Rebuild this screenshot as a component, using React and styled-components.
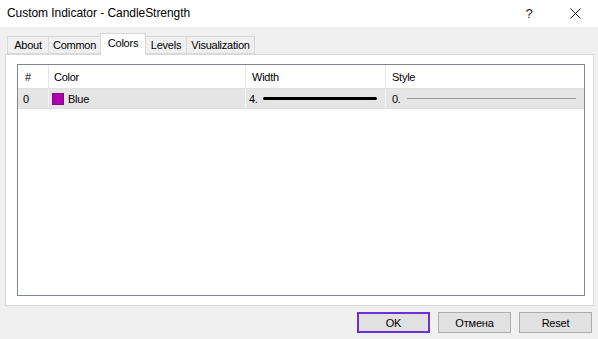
import React from "react";
import styled, { createGlobalStyle } from "styled-components";

const Global = createGlobalStyle`
  html, body { margin: 0; padding: 0; background: #f0f0f0; }
  * { box-sizing: border-box; }
`;

const Window = styled.div`
  width: 598px;
  height: 339px;
  display: flex;
  flex-direction: column;
  background: #f0f0f0;
  font-family: "Liberation Sans", Arial, sans-serif;
  color: #000;
  overflow: hidden;
`;

const TitleBar = styled.div`
  height: 27px;
  background: #fff;
  display: flex;
  align-items: center;
  padding-left: 7px;
`;

const Title = styled.div`
  flex: 1;
  font-size: 12px;
  letter-spacing: -0.05px;
  margin-top: -2px;
`;

const CaptionButton = styled.div`
  width: 46px;
  height: 27px;
  display: flex;
  align-items: center;
  justify-content: center;
  font-size: 13px;
  color: #222;
`;

const Body = styled.div`
  flex: 1;
  display: flex;
  flex-direction: column;
  padding: 6px 4px 0 5px;
`;

const TabStrip = styled.div`
  display: flex;
  align-items: flex-end;
  height: 21px;
  padding-left: 2px;
  position: relative;
  z-index: 1;
`;

const Tab = styled.div`
  width: ${(p) => p.$w}px;
  height: ${(p) => (p.$active ? 22 : 18)}px;
  margin-bottom: ${(p) => (p.$active ? -1 : 0)}px;
  background: ${(p) => (p.$active ? "#fff" : "#f0f0f0")};
  border: 1px solid #d9d9d9;
  border-bottom: ${(p) => (p.$active ? "none" : "1px solid #d9d9d9")};
  margin-left: -1px;
  display: flex;
  align-items: center;
  justify-content: center;
  padding-bottom: ${(p) => (p.$active ? 4 : 0)}px;
  font-size: 11px;
  letter-spacing: -0.25px;
  &:first-child { margin-left: 0; }
`;

const Panel = styled.div`
  height: 252px;
  background: #fff;
  border: 1px solid #d9d9d9;
  padding: 9px 8px 9px 11px;
  display: flex;
`;

const Table = styled.div`
  flex: 1;
  border: 1px solid #828790;
  display: flex;
  flex-direction: column;
  background: #fff;
`;

const Row = styled.div`
  display: grid;
  grid-template-columns: 31px 197px 140px 1fr;
  height: ${(p) => (p.$header ? 24 : 20)}px;
  background: ${(p) => (p.$header ? "#fff" : "#e5e5e5")};
  border-bottom: 1px solid #e0e0e0;
`;

const Cell = styled.div`
  display: flex;
  align-items: center;
  padding-left: ${(p) => p.$pl ?? 5}px;
  padding-right: 8px;
  border-right: 1px solid ${(p) => (p.$header ? "#e5e5e5" : "#f4f4f4")};
  font-size: 11px;
  letter-spacing: -0.25px;
  white-space: nowrap;
  &:last-child { border-right: none; }
`;

const Swatch = styled.span`
  width: 12px;
  height: 12px;
  background: #b000b0;
  border: 1px solid #7a107a;
  margin-right: 4px;
  flex: none;
`;

const LineSample = styled.span`
  flex: 1;
  height: ${(p) => p.$thick}px;
  background: ${(p) => p.$color};
  margin-left: ${(p) => p.$gap}px;
  border-radius: ${(p) => (p.$thick > 1 ? 1.5 : 0)}px;
`;

const ButtonRow = styled.div`
  display: flex;
  justify-content: flex-end;
  gap: 8px;
  padding-top: 6px;
  padding-right: 2px;
`;

const Button = styled.div`
  width: 73px;
  height: 21px;
  display: flex;
  align-items: center;
  justify-content: center;
  background: #e1e1e1;
  border: ${(p) => (p.$default ? "2px solid #6b2fd4" : "1px solid #adadad")};
  font-size: 11px;
  letter-spacing: -0.2px;
`;

const tabs = [
  { label: "About", w: 42 },
  { label: "Common", w: 53 },
  { label: "Colors", w: 46, active: true },
  { label: "Levels", w: 42 },
  { label: "Visualization", w: 69 },
];

export default function App() {
  return (
    <>
      <Global />
      <Window>
        <TitleBar>
          <Title>Custom Indicator - CandleStrength</Title>
          <CaptionButton>?</CaptionButton>
          <CaptionButton>
            <svg width="11" height="11" viewBox="0 0 11 11">
              <path d="M0.5 0.5 L10.5 10.5 M10.5 0.5 L0.5 10.5" stroke="#222" strokeWidth="1" />
            </svg>
          </CaptionButton>
        </TitleBar>
        <Body>
          <TabStrip>
            {tabs.map((t) => (
              <Tab key={t.label} $w={t.w} $active={t.active}>
                {t.label}
              </Tab>
            ))}
          </TabStrip>
          <Panel>
            <Table>
              <Row $header>
                <Cell $header $pl={7}>#</Cell>
                <Cell $header $pl={5}>Color</Cell>
                <Cell $header $pl={6}>Width</Cell>
                <Cell $header $pl={6}>Style</Cell>
              </Row>
              <Row>
                <Cell $pl={5}>0</Cell>
                <Cell $pl={3}>
                  <Swatch />
                  Blue
                </Cell>
                <Cell $pl={3}>
                  4.
                  <LineSample $thick={3} $color="#000" $gap={5} />
                </Cell>
                <Cell $pl={6}>
                  0.
                  <LineSample $thick={1} $color="#9a9a9a" $gap={6} />
                </Cell>
              </Row>
            </Table>
          </Panel>
          <ButtonRow>
            <Button $default>OK</Button>
            <Button>Отмена</Button>
            <Button>Reset</Button>
          </ButtonRow>
        </Body>
      </Window>
    </>
  );
}
